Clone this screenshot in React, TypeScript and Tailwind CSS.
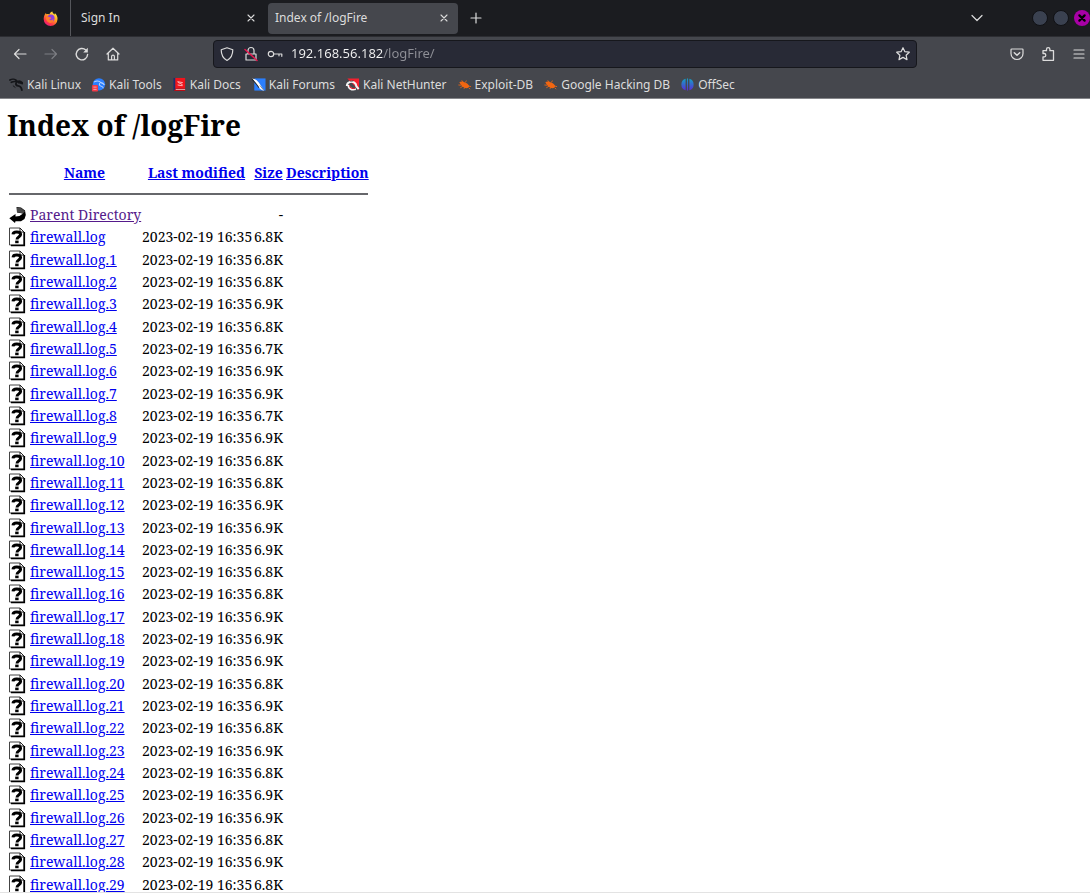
import React from "react";

type Size = "6.7K" | "6.8K" | "6.9K";

const sizes: Size[] = [
  "6.8K", "6.8K", "6.8K", "6.9K", "6.8K", "6.7K", "6.9K", "6.9K", "6.7K", "6.9K",
  "6.8K", "6.8K", "6.9K", "6.9K", "6.9K", "6.8K", "6.8K", "6.9K", "6.9K", "6.9K",
  "6.8K", "6.9K", "6.8K", "6.9K", "6.8K", "6.9K", "6.9K", "6.8K", "6.9K", "6.8K",
];

const files = sizes.map((size, i) => ({
  name: i === 0 ? "firewall.log" : `firewall.log.${i}`,
  modified: "2023-02-19 16:35",
  size,
}));

function Icon({ children, className = "size-4" }: { children: React.ReactNode; className?: string }) {
  return (
    <svg viewBox="0 0 16 16" className={`shrink-0 ${className}`} fill="none" stroke="currentColor" strokeWidth="1.2" strokeLinecap="round" strokeLinejoin="round" aria-hidden="true">
      {children}
    </svg>
  );
}

const CloseIcon = () => (
  <Icon className="size-4"><path d="M5 5l6 6M11 5l-6 6" strokeWidth="1.1" /></Icon>
);

function FirefoxIcon() {
  return (
    <svg viewBox="0 0 16 16" className="size-[15px]" aria-hidden="true">
      <defs>
        <linearGradient id="fox" x1="0.85" y1="0" x2="0.2" y2="1">
          <stop offset="0" stopColor="#fff44f" />
          <stop offset="0.4" stopColor="#ffa51f" />
          <stop offset="0.75" stopColor="#ff3647" />
          <stop offset="1" stopColor="#e31587" />
        </linearGradient>
      </defs>
      <path d="M1.6 4.200L3 2.200l.7 1.300c1-.3 2-.2 3 .1C7.600 1.500 9 .6 10 .4c.1 1.500 1.400 2.200 2.500 3.400.2-.7.1-1.100 0-1.600C14.600 4 15.600 6 15.500 8.500A7.400 7.400 0 0 1 .7 8.600C.7 7 1 5.500 1.600 4.200z" fill="url(#fox)" />
      <circle cx="8.500" cy="7.600" r="3.800" fill="#8a3fe0" />
      <path d="M3.400 6.200c1.300-.7 2.600-.3 3.600.5.900.1 1.900.3 1.700 1-.3.800-1.500.700-2.100 1.300.8 1.300 3.300 1.200 4.200-.5 1 2-1 4.500-3.500 4.200C4.500 12.400 2.600 8.700 3.400 6.200z" fill="#ff7a2c" />
    </svg>
  );
}

function KaliLinuxIcon() {
  return (
    <svg viewBox="0 0 16 16" className="size-[15px]" fill="none" stroke="#15161a" strokeLinecap="round" aria-hidden="true">
      <path d="M1 3.200c2.500-1.400 6-1 7.700 1.400M2.500 5.700c2-1 4-1.100 6-.6M9.200 4.800c1.300-.7 3.200-.5 4.800 1.200" strokeWidth="1.800" />
      <path d="M8.500 5.200c-2 1.800-1.300 3.900 1.200 4.200 2.400.3 3.600 1.700 4 4.600M10.500 6c1.500 0 2.500.4 3.500 1" strokeWidth="2" />
      <path d="M4.500 9.500l2 1.500" strokeWidth="1" />
    </svg>
  );
}

function KaliToolsIcon() {
  return (
    <svg viewBox="0 0 16 16" className="size-[15px]" aria-hidden="true">
      <circle cx="8.500" cy="7.800" r="6.600" fill="#2a7fff" />
      <path d="M3 5.500c3-1.700 6-1.200 7.500.5 1.800.2 3 1.200 3.800 2.600M9.500 6.500c-1.500 2 0 3 1.800 3.500 1 .3 1.600 1 1.800 2" fill="none" stroke="#bcd6ff" strokeWidth="1.100" />
      <rect x="1" y="8.500" width="6.500" height="7" rx="1" fill="#ef3b48" />
      <path d="M2.500 10.800h3.500M2.500 13.200h3.500" stroke="#ffb4b9" strokeWidth=".9" />
    </svg>
  );
}

function KaliDocsIcon() {
  return (
    <svg viewBox="0 0 16 16" className="size-[15px]" aria-hidden="true">
      <rect x="1.500" y="1" width="2.500" height="13.500" fill="#1d2f6c" />
      <rect x="3.500" y="1" width="10.500" height="11.500" fill="#f0141c" />
      <path d="M3.500 12.500H14V15H2z" fill="#b80d16" />
      <path d="M4 13.300h10" stroke="#f2d5d5" strokeWidth=".8" />
      <path d="M6 5l5.500 1M6.200 5c0 2.200 5 1.200 5 4M6 8.500l5 .8" fill="none" stroke="#ffd2d2" strokeWidth=".9" />
    </svg>
  );
}

function KaliForumsIcon() {
  return (
    <svg viewBox="0 0 16 16" className="size-[15px]" aria-hidden="true">
      <path d="M3.500 1.500h12v13h-12z" fill="#2a7fff" />
      <path d="M1 1.500c3 .5 5.500 1.700 7.500 4.500l5.500 8.500c-2.500-.5-5-2-6.500-4.500z" fill="#fff" />
      <path d="M1 2l5 6 2.500 3.500" fill="none" stroke="#20242c" strokeWidth="1.100" />
      <path d="M9.500 9l4 5" stroke="#55617a" strokeWidth=".8" />
    </svg>
  );
}

function KaliNetHunterIcon() {
  return (
    <svg viewBox="0 0 16 16" className="size-[15px]" aria-hidden="true">
      <path d="M2.500 1.500H15v12.500z" fill="#f5202f" />
      <path d="M2 9.500c0-4 5-5.500 8-3.500 1.500 1 2 2.500 2.200 4l2.300 3" fill="none" stroke="#f5f5f5" strokeWidth="2.200" />
      <path d="M4 8.500c-.5 3.500 3 5.500 7.500 4.200" fill="none" stroke="#f5f5f5" strokeWidth="2.600" />
      <path d="M4.800 8.800c0 2.700 3 4 6.200 3.300" fill="none" stroke="#d81f2c" strokeWidth="1.100" />
      <path d="M5.500 4.500l3.500-.3" stroke="#20242c" strokeWidth=".8" />
    </svg>
  );
}

function ExploitIcon() {
  return (
    <svg viewBox="0 0 16 16" className="size-[15px]" aria-hidden="true">
      <path d="M2.500 5.500c1.500-1 4-1 6 .3 2 .5 3.500 1.900 4.500 3.900 0 1.300-1 2.300-3 2.300C7 11.500 4.500 9.500 2.500 5.500z" fill="#f26611" />
      <path d="M1.500 8.500l3 .3M5 3.500l1.500 2M9 5.800l1-2M3.500 11.500l3-1.700M12 9.500l3 .8M12.500 11.500l1.500 1.500M8 11l-.5 1.700" stroke="#f26611" strokeWidth=".9" />
    </svg>
  );
}

function OffSecIcon() {
  return (
    <svg viewBox="0 0 16 16" className="size-[15px]" aria-hidden="true">
      <defs>
        <linearGradient id="offsec" x1="0" y1="0" x2="0" y2="1">
          <stop offset="0" stopColor="#12a3c4" />
          <stop offset="1" stopColor="#5a2bd6" />
        </linearGradient>
      </defs>
      <path d="M6 1.800v12.400A6.500 6.500 0 0 1 6 1.800zM7.400 1.500h1.200v13H7.400zM10 1.800a6.500 6.500 0 0 1 0 12.400z" fill="url(#offsec)" />
    </svg>
  );
}

const bookmarks = [
  { label: "Kali Linux", icon: <KaliLinuxIcon /> },
  { label: "Kali Tools", icon: <KaliToolsIcon /> },
  { label: "Kali Docs", icon: <KaliDocsIcon /> },
  { label: "Kali Forums", icon: <KaliForumsIcon /> },
  { label: "Kali NetHunter", icon: <KaliNetHunterIcon /> },
  { label: "Exploit-DB", icon: <ExploitIcon /> },
  { label: "Google Hacking DB", icon: <ExploitIcon /> },
  { label: "OffSec", icon: <OffSecIcon /> },
];

function UnknownFileIcon() {
  return (
    <svg viewBox="0 0 18 20" className="block h-5 w-[18px]" role="img" aria-label="[   ]">
      <path d="M.5 1h10.500l4 4v13H.5z" fill="#fff" stroke="#444" strokeWidth="1" />
      <path d="M15.300 5v13.500H2" fill="none" stroke="#000" strokeWidth="1.600" />
      <path d="M11 1v4h4z" fill="#fff" stroke="#222" strokeWidth="1" />
      <path d="M4 7.400c.3-3.200 7.600-3 7.600.2 0 2.200-3.600 2-3.600 4.900" fill="none" stroke="#000" strokeWidth="3" />
      <rect x="6.200" y="13.600" width="3.400" height="2.600" fill="#000" />
    </svg>
  );
}

function BackIcon() {
  return (
    <svg viewBox="0 0 18 20" className="block h-5 w-[18px]" role="img" aria-label="[PARENTDIR]">
      <path d="M7.500 2l4.500.5 4 3 .8 4.500-1.300 4-3.500 2.200H6.500L6 18 .3 13.200 6.500 9v2.500l4-.5 3.500-2.500L8 7.500z" fill="#000" />
      <path d="M8 2.500l4.500.8L16 6.500 14 8.500 8 7z" fill="#4a4a4a" />
    </svg>
  );
}

export default function App() {
  return (
    <div className="flex h-screen flex-col overflow-hidden bg-white font-['Noto_Sans',sans-serif]">
      <header className="shrink-0 border-b border-[#85868a] bg-[#45474d] text-xs text-[#dcdcdc]">
        <div className="flex h-[37px] items-center border-b border-[#2c2d32] bg-[#1b1c20]">
          <div className="flex h-full w-[71px] items-center justify-end border-r border-[#55565b] pr-3">
            <FirefoxIcon />
          </div>
          <div className="flex w-[197px] items-center justify-between pr-[9px] pl-[10px]">
            <button>Sign In</button>
            <button aria-label="Close Sign In"><CloseIcon /></button>
          </div>
          <div className="flex h-[31px] w-[190px] items-center justify-between rounded bg-[#45474d] pr-[6px] pl-[7px]">
            <button>Index of /logFire</button>
            <button aria-label="Close Index of /logFire"><CloseIcon /></button>
          </div>
          <button aria-label="New tab" className="ml-[10px]">
            <Icon><path d="M8 3v10M3 8h10" /></Icon>
          </button>
          <button aria-label="List all tabs" className="ml-auto">
            <Icon><path d="M3 5.500l5 5 5-5" /></Icon>
          </button>
          <div className="ml-[47px] flex items-center gap-[5px]">
            <button aria-label="Minimize" className="size-4 rounded-full border border-[#101115] bg-[#3a4150]" />
            <button aria-label="Maximize" className="size-4 rounded-full border border-[#101115] bg-[#3a4150]" />
            <button aria-label="Close window" className="flex size-4 items-center justify-center rounded-full bg-[#a800a6] text-black">
              <Icon className="size-3"><path d="M4.500 4.500l7 7M11.500 4.500l-7 7" strokeWidth="3" /></Icon>
            </button>
          </div>
        </div>

        <div className="flex h-[34px] items-center">
          <nav className="flex w-[213px] items-center gap-[15px] pl-3" aria-label="Navigation">
            <button aria-label="Back"><Icon><path d="M14 8H2.500M7 3.500L2.500 8 7 12.500" /></Icon></button>
            <button aria-label="Forward" className="text-[#7d7e83]"><Icon><path d="M2 8h11.500M9 3.500L13.500 8 9 12.500" /></Icon></button>
            <button aria-label="Reload"><Icon><path d="M13.600 8.500A5.700 5.700 0 1 1 11.800 4" strokeWidth="1.400" /><path d="M13.800 1.800v4.700H9.200z" fill="currentColor" stroke="none" /></Icon></button>
            <button aria-label="Home"><Icon><path d="M2 8l6-5.800L14 8M3.300 7v6.900h9.400V7M6.600 13.900v-3.400a1.400 1.400 0 0 1 2.800 0v3.400" /></Icon></button>
          </nav>
          <div className="flex h-7 min-w-0 flex-1 items-center gap-2 rounded border border-[#16171c] bg-[#282a36] px-[5px]">
            <Icon><path d="M8 1.800l5.800 2c0 4.800-1.500 8.400-5.800 10.700C3.700 12.200 2.200 8.600 2.200 3.800z" /></Icon>
            <Icon><path d="M3 8h10v6H3zM5 8V4.500a3 3 0 0 1 6 0V8" /><path d="M2 3.500l12 11" stroke="#e5174f" strokeWidth="1.500" /></Icon>
            <Icon><circle cx="4" cy="8" r="2.700" /><path d="M6.800 8h8v2.300M12 8v1.800" /></Icon>
            <input
              aria-label="Address"
              defaultValue="192.168.56.182/logFire/"
              className="min-w-0 flex-1 bg-[linear-gradient(90deg,#f4f4f4_92px,#8f9097_92px)] bg-clip-text text-[13px] text-transparent caret-white outline-none"
            />
            <button aria-label="Bookmark this page"><Icon><path d="M8 1.700l1.900 4 4.400.5-3.200 3 .9 4.400L8 11.400l-4 2.200.9-4.400-3.200-3 4.400-.5z" /></Icon></button>
          </div>
          <div className="flex w-[173px] items-center justify-end gap-[15px] pr-[3px]">
            <button aria-label="Pocket"><Icon><path d="M2.800 3h10.400a.8.800 0 0 1 .8.800V7.500a6 6 0 0 1-12 0V3.800a.8.800 0 0 1 .8-.8z" /><path d="M5.300 6.800L8 9.300l2.700-2.500" strokeWidth="1.500" /></Icon></button>
            <button aria-label="Extensions"><Icon><path d="M3 14.300v-3.500h1.500a1.700 1.700 0 0 0 0-3.300H3V4.700h3.500V3.300a1.700 1.700 0 0 1 3.400 0v1.400h3.600v9.600z" strokeWidth="1.300" /></Icon></button>
            <button aria-label="Open application menu"><Icon><path d="M3 4h10M3 8h10M3 12h10" /></Icon></button>
          </div>
        </div>

        <div className="flex h-[27px] items-center gap-[10px] pl-[9px]">
          {bookmarks.map((b) => (
            <a key={b.label} href="#" className="flex items-center gap-[3px] whitespace-nowrap">
              {b.icon}
              {b.label}
            </a>
          ))}
        </div>
      </header>

      <main className="min-h-0 flex-1 overflow-hidden border-b border-[#e3e3e3] px-[7px] pt-[7px] font-['Noto_Serif','Liberation_Serif',serif] text-sm text-black">
        <h1 className="mb-[18px] text-[28px] leading-[38px] font-bold">Index of /logFire</h1>
        <table className="h-[734px] w-[361px] table-fixed border-separate border-spacing-0 leading-5 whitespace-nowrap">
          <colgroup>
            <col className="w-[23px]" />
            <col className="w-[112px]" />
            <col className="w-[112px]" />
            <col className="w-8" />
            <col />
          </colgroup>
          <thead>
            <tr className="h-[22px] text-[#0000ee]">
              <th />
              <th className="pr-[3px]"><a href="#" className="underline">Name</a></th>
              <th className="pr-[3px]"><a href="#" className="underline">Last modified</a></th>
              <th className="pr-[3px]"><a href="#" className="underline">Size</a></th>
              <th className="text-left"><a href="#" className="underline">Description</a></th>
            </tr>
            <tr className="h-5">
              <th colSpan={5} className="pl-[2px]"><hr className="border-t-2 border-[#66676b]" /></th>
            </tr>
          </thead>
          <tbody>
            <tr>
              <td className="pl-[2px]"><BackIcon /></td>
              <td><a href="#" className="text-[#551a8b] underline">Parent Directory</a></td>
              <td />
              <td className="pr-[3px] text-right">-</td>
              <td />
            </tr>
            {files.map((f) => (
              <tr key={f.name}>
                <td className="pl-[2px]"><UnknownFileIcon /></td>
                <td><a href="#" className="text-[#0000ee] underline">{f.name}</a></td>
                <td>{f.modified}</td>
                <td className="pr-[3px] text-right">{f.size}</td>
                <td />
              </tr>
            ))}
          </tbody>
        </table>
      </main>
    </div>
  );
}
